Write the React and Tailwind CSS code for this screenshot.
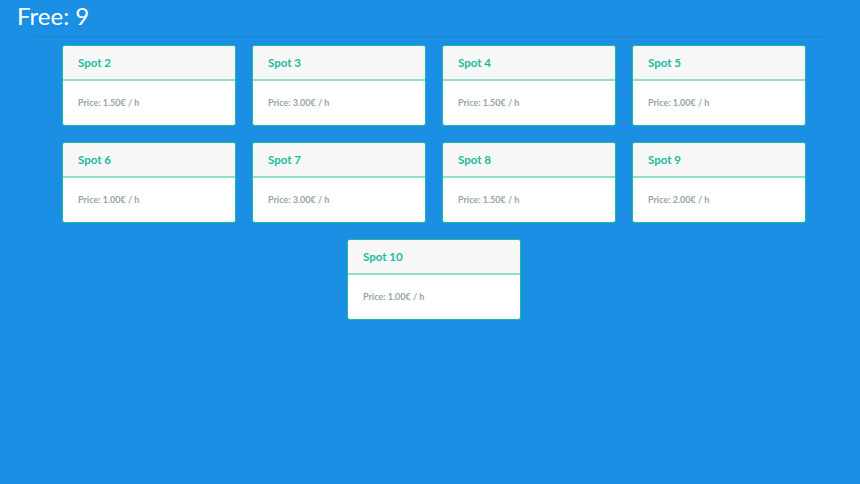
import React from 'react'

const spots = [
    { id: 2, price: '1.50' },
    { id: 3, price: '3.00' },
    { id: 4, price: '1.50' },
    { id: 5, price: '1.00' },
    { id: 6, price: '1.00' },
    { id: 7, price: '3.00' },
    { id: 8, price: '1.50' },
    { id: 9, price: '2.00' },
    { id: 10, price: '1.00' },
]

const SpotCard = ({ spot }) => (
    <div className="w-[174px] bg-white border border-[#1abc9c] rounded-[3px] overflow-hidden">
        <div className="h-[35px] bg-[#f7f7f7] border-b-2 border-[#8fdfcc] flex items-center px-[15px]">
            <span className="text-[11.5px] font-bold text-[#1abc9c]">Spot {spot.id}</span>
        </div>
        <div className="h-[44px] flex items-center px-[15px]">
            <span className="text-[9px] font-bold text-[#95a5a6]">Price: {spot.price}€ / h</span>
        </div>
    </div>
)

const App = () => {
    return (
        <div className="min-h-[484px] w-full bg-[#1a8fe3]" style={{ fontFamily: 'Lato, "Noto Sans", sans-serif' }}>
            {/* Header */}
            <h1 className="text-[24px] leading-[32px] text-white pl-[17px]">Free: 9</h1>
            <div className="mx-[33px] mt-[4px] border-t border-[#1784d2]"></div>

            {/* Spots */}
            <div className="w-[806px] pl-[62px] pt-[8px] flex flex-wrap justify-center gap-4">
                {spots.map(spot => (
                    <SpotCard key={spot.id} spot={spot} />
                ))}
            </div>
        </div>
    )
}

export default App
